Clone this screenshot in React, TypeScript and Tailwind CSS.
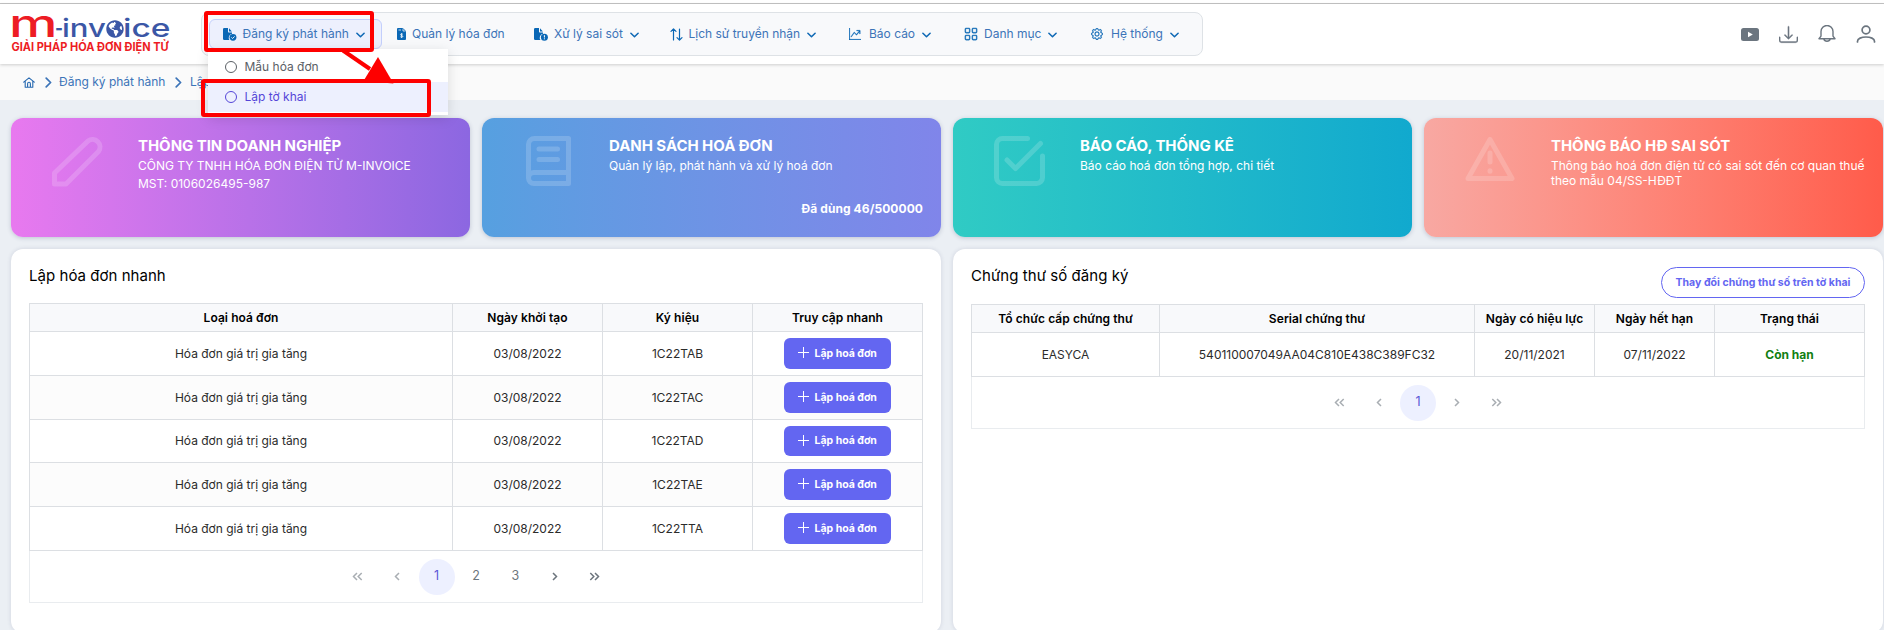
import type { ReactNode } from 'react';
import { BsDownload, BsGear, BsGraphUpArrow, BsGrid } from 'react-icons/bs';
import { FaGlobeAmericas } from 'react-icons/fa';

function Chevron({ className }: { className: string }) {
  return (
    <svg viewBox="0 0 10 6" className={className} fill="none" stroke="currentColor" strokeWidth="1.7" strokeLinecap="round" strokeLinejoin="round">
      <path d="M1 1l4 4 4-4" />
    </svg>
  );
}

function CrumbArrow() {
  return (
    <svg viewBox="0 0 7 11" className="h-[11px] w-[7px]" fill="none" stroke="currentColor" strokeWidth="1.7" strokeLinecap="round" strokeLinejoin="round">
      <path d="M1.200 1.200l4.400 4.300-4.400 4.300" />
    </svg>
  );
}

function HomeIcon() {
  return (
    <svg viewBox="0 0 12 11" className="h-[11px] w-[12px]" fill="none" stroke="currentColor" strokeWidth="1.100" strokeLinecap="round" strokeLinejoin="round">
      <path d="M.7 5.200 6 .8l5.300 4.400M2.200 4.200v6.100h7.600V4.200M4.600 10.200V6.700a1.400 1.400 0 0 1 2.800 0v3.500" />
    </svg>
  );
}

function FileCheckIcon() {
  return (
    <svg viewBox="0 0 14 13" className="h-[13px] w-[14px]">
      <path d="M1.200 0H5v3.600c0 .6.4 1 1 1h3v1.200a4 4 0 0 0-2.600 6.200H1.200A1.200 1.200 0 0 1 0 10.800V1.200A1.200 1.200 0 0 1 1.200 0zM6 .2 8.900 3.600H6z" fill="currentColor" />
      <circle cx="10" cy="9.300" r="3.400" fill="currentColor" />
      <path d="M8.400 9.400l1.200 1.100 2-2.100" fill="none" stroke="#fff" strokeWidth=".9" />
    </svg>
  );
}

function FileAlertIcon() {
  return (
    <svg viewBox="0 0 14 13" className="h-[13px] w-[14px]">
      <path d="M1.200 0H5v3.600c0 .6.4 1 1 1h3v1.200a4 4 0 0 0-2.600 6.200H1.200A1.200 1.200 0 0 1 0 10.800V1.200A1.200 1.200 0 0 1 1.200 0zM6 .2 8.900 3.600H6z" fill="currentColor" />
      <circle cx="10.400" cy="9.200" r="3.500" fill="currentColor" />
      <path d="M10.400 7.200v2.300M10.400 10.300v1" fill="none" stroke="#fff" strokeWidth="1" />
    </svg>
  );
}

function InvoiceIcon() {
  return (
    <svg viewBox="0 0 9 12" className="h-[12px] w-[9px]">
      <path d="M1 0h4.800L9 3v8a1 1 0 0 1-1 1H1a1 1 0 0 1-1-1V1a1 1 0 0 1 1-1z" fill="currentColor" />
      <path d="M1.500 2h2.500M6 .5V3h2.700" fill="none" stroke="#fff" strokeWidth=".7" />
      <path d="M5.800 6.300c-.5-.5-2.300-.6-2.300.4s2.300.6 2.300 1.700-1.900 1-2.400.3M4.600 5.200v4.700" fill="none" stroke="#fff" strokeWidth=".8" />
    </svg>
  );
}

function UpDownIcon() {
  return (
    <svg viewBox="0 0 13 13" className="h-[13px] w-[13px]" fill="none" stroke="currentColor" strokeWidth="1.200" strokeLinecap="round" strokeLinejoin="round">
      <path d="M3.500 12V1M1 3.400 3.500 .9 6 3.400M9.500 1v11M7 9.600l2.500 2.500L12 9.600" />
    </svg>
  );
}

function NavItem({ icon, slot, width, label, active, arrow = true }: { icon: ReactNode; slot: string; width: string; label: string; active?: boolean; arrow?: boolean }) {
  return (
    <div className={`flex h-[30px] shrink-0 items-center rounded-md border pl-[13px] ${width} ${active ? 'mr-px border-[#c3cffc] bg-[#edf0fd]' : 'border-transparent'}`}>
      <span className={`flex shrink-0 text-[#0a67b5] ${slot}`}>{icon}</span>
      <span>{label}</span>
      {arrow && <Chevron className="mt-px ml-[7px] h-[6px] w-[9px] text-[#0f69b5]" />}
    </div>
  );
}

function Logo() {
  return (
    <div className="relative h-[38px] w-[160px]">
      <svg viewBox="0 0 160 38" className="h-[38px] w-[160px] overflow-visible" fontFamily="Inter, sans-serif">
        <text x="-2" y="22" fontSize="38" fontWeight="500" fill="#ed1c24" textLength="48.500" lengthAdjust="spacingAndGlyphs">m</text>
        <g fill="#3b57a6" fontSize="25" fontWeight="500">
          <text x="44" y="22" textLength="8" lengthAdjust="spacingAndGlyphs">-</text>
          <text x="51" y="22" textLength="44" lengthAdjust="spacingAndGlyphs">inv</text>
          <text x="112" y="22" textLength="47.500" lengthAdjust="spacingAndGlyphs">ice</text>
        </g>
        <text x="0.500" y="35.500" fontSize="11.500" fontWeight="700" fill="#ed1c24" textLength="157" lengthAdjust="spacingAndGlyphs">GIẢI PHÁP HÓA ĐƠN ĐIỆN TỬ</text>
      </svg>
      <FaGlobeAmericas size={18} className="absolute top-[5px] left-[95px] text-[#3b57a6]" />
    </div>
  );
}

const art = 'fill-none stroke-white stroke-[5] opacity-[.17]';

const cards = [
  {
    title: 'THÔNG TIN DOANH NGHIỆP',
    tone: 'bg-linear-to-r from-[#e879ef] to-[#8c67e1]',
    lead: 'leading-[18px] pt-px',
    lines: ['CÔNG TY TNHH HÓA ĐƠN ĐIỆN TỬ M-INVOICE', 'MST: 0106026495-987'],
    pos: 'pl-[41px]',
    art: <path d="M2.500 48V37L36 5a7.500 7.500 0 0 1 10.500 10.500L14 48Z" />,
  },
  {
    title: 'DANH SÁCH HOÁ ĐƠN',
    tone: 'bg-linear-to-r from-[#56a0e0] to-[#8085ea]',
    lead: 'leading-[18px] pt-px',
    lines: ['Quản lý lập, phát hành và xử lý hoá đơn'],
    note: 'Đã dùng 46/500000',
    pos: 'pl-[44px]',
    art: <path d="M42.500 36.500H8a5.500 5.500 0 0 0 0 11H42.500V2.500H8.500a6 6 0 0 0-6 6V42M13 13H31.500M13 23.500H31.500" />,
  },
  {
    title: 'BÁO CÁO, THỐNG KÊ',
    tone: 'bg-linear-to-r from-[#30cbc4] to-[#11a9ce]',
    lead: 'leading-[18px] pt-px',
    lines: ['Báo cáo hoá đơn tổng hợp, chi tiết'],
    pos: 'pl-[41px]',
    art: <path d="M33.500 2.500H8.500a6 6 0 0 0-6 6v33a6 6 0 0 0 6 6h34a6 6 0 0 0 6-6V20M13 24l8.500 8.500 25-25" />,
  },
  {
    title: 'THÔNG BÁO HĐ SAI SÓT',
    tone: 'bg-linear-to-r from-[#f8a8a2] to-[#ff5b4a]',
    lead: 'leading-[15px] pt-[2px]',
    lines: ['Thông báo hoá đơn điện tử có sai sót đến cơ quan thuế', 'theo mẫu 04/SS-HĐĐT'],
    pos: 'pl-[41px]',
    art: <path d="M25 3.500 47 42.500H3ZM25 17v9M25 34.800v.4" />,
  },
];

function Pager({ pages, last }: { pages: string[]; last?: boolean }) {
  const off = 'text-[#a9aeb3]';
  const on = 'text-[#6c757d]';
  const item = 'flex h-9 w-9 items-center justify-center rounded-full';
  const glyph = 'h-[9px] fill-none stroke-current stroke-[1.5]';
  return (
    <div className="flex h-[52px] items-center justify-center gap-[3.400px] border border-t-0 border-[#e9ecef] text-[12.500px] text-[#6c757d]">
      <span className={`${item} ${off}`}>
        <svg viewBox="0 0 11 9" className={`${glyph} w-[11px]`}><path d="M5 1 1.500 4.500 5 8M9.700 1 6.200 4.500 9.700 8" /></svg>
      </span>
      <span className={`${item} ${off}`}>
        <svg viewBox="0 0 6 9" className={`${glyph} w-[6px]`}><path d="M5 1 1.500 4.500 5 8" /></svg>
      </span>
      {pages.map((p, i) => (
        <span key={p} className={`${item} ${i === 0 ? 'bg-[#edf0ff] text-[#5a55d6]' : ''}`}>{p}</span>
      ))}
      <span className={`${item} ${last ? off : on}`}>
        <svg viewBox="0 0 6 9" className={`${glyph} w-[6px]`}><path d="M1 1 4.500 4.500 1 8" /></svg>
      </span>
      <span className={`${item} ${last ? off : on}`}>
        <svg viewBox="0 0 11 9" className={`${glyph} w-[11px]`}><path d="M1.300 1 4.800 4.500 1.300 8M6 1 9.500 4.500 6 8" /></svg>
      </span>
    </div>
  );
}

const cell = 'flex items-center justify-center border-r border-b border-[#dcdfe3]';

function Row({ cells, cols, className }: { cells: ReactNode[]; cols: string; className: string }) {
  return (
    <div className={`grid border-l border-[#dcdfe3] ${cols} ${className}`}>
      {cells.map((c, i) => <div key={i} className={cell}>{c}</div>)}
    </div>
  );
}

const invoices = [
  { code: '1C22TAB', row: 'h-[44px]', btn: 'h-[31px]' },
  { code: '1C22TAC', row: 'h-[44px] bg-[#fcfcfc]', btn: 'h-[31px]' },
  { code: '1C22TAD', row: 'h-[43px]', btn: 'h-[30px]' },
  { code: '1C22TAE', row: 'h-[44px] bg-[#fcfcfc]', btn: 'h-[31px]' },
  { code: '1C22TTA', row: 'h-[44px]', btn: 'h-[31px]' },
];

const quickCols = 'grid-cols-[423px_150px_150px_170px]';
const certCols = 'grid-cols-[188px_315px_120px_120px_150px]';
const head = 'h-[29px] border-t bg-[#f8f9fb] font-semibold tracking-[0.06px] text-black';
const panel = 'h-[384px] rounded-xl bg-white px-[18px] pt-[17px] shadow-[0_0_4px_rgba(60,70,110,0.16)]';

function MenuOption({ label, className }: { label: string; className: string }) {
  return (
    <div className={`flex items-center gap-[8px] pl-[16.500px] ${className}`}>
      <span className="h-[12px] w-[12px] rounded-full border border-current" />
      <span>{label}</span>
    </div>
  );
}

export default function App() {
  return (
    <div className="relative flex h-[630px] w-[1884px] flex-col overflow-hidden bg-[#ebeff4] font-['Inter','Liberation_Sans',sans-serif] text-[12px] whitespace-nowrap text-[#2b2b2b]">
      <div className="h-[4px] shrink-0 border-b border-[#c4c4c4] bg-white" />

      <header className="z-10 flex h-[60px] shrink-0 bg-white pl-[11px] shadow-[0_1px_3px_rgba(0,0,0,0.18)]">
        <div className="mt-[11px] w-[190px]"><Logo /></div>
        <nav className="mt-[8px] flex h-[44px] w-[1002px] items-center rounded-lg border border-[#dee2e6] bg-[#f8f9fb] pl-[7px] text-[#3c74b8]">
          <NavItem active label="Đăng ký phát hành" icon={<FileCheckIcon />} slot="w-[19.500px]" width="w-[173px]" />
          <NavItem arrow={false} label="Quản lý hóa đơn" icon={<InvoiceIcon />} slot="w-[15px]" width="w-[137px]" />
          <NavItem label="Xử lý sai sót" icon={<FileAlertIcon />} slot="w-[20px]" width="w-[136px]" />
          <NavItem label="Lịch sử truyền nhận" icon={<UpDownIcon />} slot="w-[18.500px]" width="w-[179px]" />
          <NavItem label="Báo cáo" icon={<BsGraphUpArrow size={12} strokeWidth={0.4} />} slot="w-[20px]" width="w-[115px]" />
          <NavItem label="Danh mục" icon={<BsGrid size={14} strokeWidth={0.4} />} slot="w-[20px]" width="w-[127px]" />
          <NavItem label="Hệ thống" icon={<BsGear size={12} strokeWidth={0.4} />} slot="w-[20px]" width="w-[118px]" />
        </nav>
        <div className="ml-auto flex h-[60px] items-center gap-[20px] pr-[8px] text-[#6b757f]">
          <svg viewBox="0 0 18 13" className="h-[13px] w-[18px]">
            <rect width="18" height="13" rx="2.500" fill="currentColor" />
            <path d="M7 3.700v5.600l4.800-2.800z" fill="#fff" />
          </svg>
          <BsDownload size={19} strokeWidth={0.3} />
          <svg viewBox="0 0 18 18" className="h-[18px] w-[18px]" fill="none" stroke="currentColor" strokeWidth="1.400" strokeLinejoin="round" strokeLinecap="round">
            <path d="M1 13.700h16l-2-2.600V6.500a6 6 0 0 0-12 0v4.600zM5.800 14a3.300 2.900 0 0 0 6.400 0" />
          </svg>
          <svg viewBox="0 0 20 18" className="h-[18px] w-[20px]" fill="none" stroke="currentColor" strokeWidth="1.700" strokeLinecap="round">
            <circle cx="10" cy="5" r="3.900" />
            <path d="M1.500 17v-.8c0-2.600 4-4.200 8.500-4.200s8.500 1.600 8.500 4.200v.8" />
          </svg>
        </div>
      </header>

      <div className="flex h-[36px] shrink-0 items-center bg-[#fafafa] pl-[23px] text-[#3c74b8]">
        <span className="flex w-[22px] text-[#2668b0]"><HomeIcon /></span>
        <span className="flex w-[14px]"><CrumbArrow /></span>
        <span className="w-[116px]">Đăng ký phát hành</span>
        <span className="flex w-[15px]"><CrumbArrow /></span>
        <span>Lập tờ khai</span>
      </div>

      <main className="flex flex-col gap-[12px] pt-[18px] pl-[11px]">
        <div className="grid grid-cols-[459px_459px_459px_459px] gap-[12px] text-white">
          {cards.map((c) => (
            <section key={c.title} className={`flex h-[119px] rounded-xl pt-[18px] shadow-[0_1px_4px_rgba(60,70,110,0.25)] ${c.tone}`}>
              <div className={`w-[127px] shrink-0 ${c.pos}`}>
                <svg viewBox="0 0 51 51" className={`h-[51px] w-[51px] ${art}`} strokeLinecap="round" strokeLinejoin="round">{c.art}</svg>
              </div>
              <div className="flex h-[83px] flex-1 flex-col pr-[18px]">
                <h2 className="text-[15px] leading-[20px] font-bold tracking-[-0.05px]">{c.title}</h2>
                <div className={c.lead}>
                  {c.lines.map((l) => <p key={l}>{l}</p>)}
                </div>
                {c.note && <p className="mt-auto self-end leading-[20px] font-bold tracking-[0.08px]">{c.note}</p>}
              </div>
            </section>
          ))}
        </div>

        <div className="flex gap-[12px]">
          <section className={`w-[930px] ${panel}`}>
            <h3 className="mb-[17px] text-[15px] leading-[20px] tracking-[0.04px] text-black">Lập hóa đơn nhanh</h3>
            <Row cols={quickCols} className={head} cells={['Loại hoá đơn', 'Ngày khởi tạo', 'Ký hiệu', 'Truy cập nhanh']} />
            {invoices.map((v) => (
              <Row
                key={v.code}
                cols={quickCols}
                className={v.row}
                cells={[
                  'Hóa đơn giá trị gia tăng',
                  '03/08/2022',
                  v.code,
                  <button className={`flex w-[107px] items-center rounded-md bg-[#6366f1] pl-[14px] text-[10.500px] font-bold text-white ${v.btn}`}>
                    <svg viewBox="0 0 11 11" className="mr-[5.500px] mb-[2px] h-[11px] w-[11px]" stroke="currentColor" strokeWidth="1"><path d="M5.500 0v11M0 5.500h11" /></svg>
                    Lập hoá đơn
                  </button>,
                ]}
              />
            ))}
            <Pager pages={['1', '2', '3']} />
          </section>

          <section className={`w-[930px] ${panel}`}>
            <div className="mb-[6px] flex h-[32px] justify-between">
              <h3 className="text-[15px] leading-[20px] tracking-[0.06px] text-black">Chứng thư số đăng ký</h3>
              <button className="mt-px h-[31px] w-[204px] rounded-full border border-[#6366f1] text-[10.500px] font-bold tracking-[0.03px] text-[#6366f1]">Thay đổi chứng thư số trên tờ khai</button>
            </div>
            <Row cols={certCols} className={head} cells={['Tổ chức cấp chứng thư', 'Serial chứng thư', 'Ngày có hiệu lực', 'Ngày hết hạn', 'Trạng thái']} />
            <Row cols={certCols} className="h-[44px]" cells={['EASYCA', '540110007049AA04C810E438C389FC32', '20/11/2021', '07/11/2022', <span className="font-bold text-[#128012]">Còn hạn</span>]} />
            <Pager pages={['1']} last />
          </section>
        </div>
      </main>

      <div className="absolute top-[49px] left-[208px] z-20 w-[240px] bg-white pb-[3px] shadow-[0_3px_12px_rgba(0,0,0,0.13)]">
        <MenuOption label="Mẫu hóa đơn" className="h-[33px] pt-[3px] text-[#5b6066]" />
        <MenuOption label="Lập tờ khai" className="h-[30px] bg-[#edf0fe] text-[#5546d8]" />
      </div>

      <svg viewBox="0 0 60 40" className="absolute top-[48px] left-[340px] z-30 h-[40px] w-[60px]">
        <path d="M3 2.500 30 21" stroke="#fe0000" strokeWidth="4" />
        <path d="M38 9 53.500 35.500 23.500 33Z" fill="#fe0000" />
      </svg>
      <div className="absolute top-[11px] left-[204px] z-30 h-[41px] w-[170px] rounded-[3px] border-4 border-[#fe0000]" />
      <div className="absolute top-[79px] left-[201px] z-30 h-[38px] w-[230px] rounded-[3px] border-4 border-[#fe0000]" />
    </div>
  );
}
